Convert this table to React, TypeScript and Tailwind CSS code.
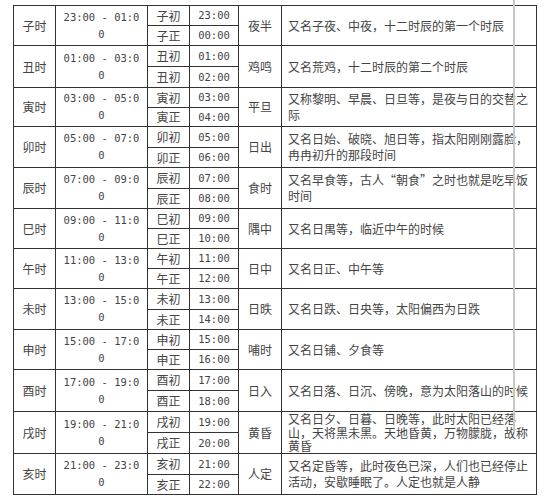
import React from "react";

type Row = {
  name: string;
  range: string;
  a: string;
  at: string;
  b: string;
  bt: string;
  alias: string;
  desc: string[];
  h: number;
};

const rows: Row[] = [
  { name: "子时", range: "23:00 - 01:00", a: "子初", at: "23:00", b: "子正", bt: "00:00", alias: "夜半", desc: ["又名子夜、中夜，十二时辰的第一个时辰"], h: 40 },
  { name: "丑时", range: "01:00 - 03:00", a: "丑初", at: "01:00", b: "丑初", bt: "02:00", alias: "鸡鸣", desc: ["又名荒鸡，十二时辰的第二个时辰"], h: 42 },
  { name: "寅时", range: "03:00 - 05:00", a: "寅初", at: "03:00", b: "寅正", bt: "04:00", alias: "平旦", desc: ["又称黎明、早晨、日旦等，是夜与日的交替之", "际"], h: 39 },
  { name: "卯时", range: "05:00 - 07:00", a: "卯初", at: "05:00", b: "卯正", bt: "06:00", alias: "日出", desc: ["又名日始、破晓、旭日等，指太阳刚刚露脸，", "冉冉初升的那段时间"], h: 41 },
  { name: "辰时", range: "07:00 - 09:00", a: "辰初", at: "07:00", b: "辰正", bt: "08:00", alias: "食时", desc: ["又名早食等，古人“朝食”之时也就是吃早饭", "时间"], h: 41 },
  { name: "巳时", range: "09:00 - 11:00", a: "巳初", at: "09:00", b: "巳正", bt: "10:00", alias: "隅中", desc: ["又名日禺等，临近中午的时候"], h: 40 },
  { name: "午时", range: "11:00 - 13:00", a: "午初", at: "11:00", b: "午正", bt: "12:00", alias: "日中", desc: ["又名日正、中午等"], h: 40 },
  { name: "未时", range: "13:00 - 15:00", a: "未初", at: "13:00", b: "未正", bt: "14:00", alias: "日昳", desc: ["又名日跌、日央等，太阳偏西为日跌"], h: 41 },
  { name: "申时", range: "15:00 - 17:00", a: "申初", at: "15:00", b: "申正", bt: "16:00", alias: "哺时", desc: ["又名日铺、夕食等"], h: 40 },
  { name: "酉时", range: "17:00 - 19:00", a: "酉初", at: "17:00", b: "酉正", bt: "18:00", alias: "日入", desc: ["又名日落、日沉、傍晚，意为太阳落山的时候"], h: 42 },
  { name: "戌时", range: "19:00 - 21:00", a: "戌初", at: "19:00", b: "戌正", bt: "20:00", alias: "黄昏", desc: ["又名日夕、日暮、日晚等，此时太阳已经落", "山，天将黑未黑。天地昏黄，万物朦胧，故称", "黄昏"], h: 42 },
  { name: "亥时", range: "21:00 - 23:00", a: "亥初", at: "21:00", b: "亥正", bt: "22:00", alias: "人定", desc: ["又名定昏等，此时夜色已深，人们也已经停止", "活动，安歇睡眠了。人定也就是人静"], h: 41 },
];

const hClass: Record<number, string> = {
  19: "h-[19px]",
  20: "h-[20px]",
  21: "h-[21px]",
  22: "h-[22px]",
};

const cjk = "font-['Noto_Sans_CJK_SC',sans-serif]";
const mono = "font-['DejaVu_Sans_Mono',monospace]";
const cell = "border border-[#333] p-0 align-middle";

export default function App() {
  return (
    <div className="relative w-[545px] h-[500px] bg-white overflow-hidden">
      <div className="pl-[13px] pt-[5px]">
        <table className="table-fixed border-collapse w-[523px] text-[#444]">
          <colgroup>
            <col className="w-[42px]" />
            <col className="w-[92px]" />
            <col className="w-[42px]" />
            <col className="w-[49px]" />
            <col className="w-[43px]" />
            <col className="w-[255px]" />
          </colgroup>
          <tbody>
            {rows.map((r) => {
              const top = Math.ceil(r.h / 2);
              const bot = r.h - top;
              const [r1, r2] = [r.range.slice(0, 12), r.range.slice(12)];
              return (
                <React.Fragment key={r.name}>
                  <tr className={hClass[top]}>
                    <td rowSpan={2} className={`${cell} text-center text-[12px] ${cjk}`}>
                      {r.name}
                    </td>
                    <td rowSpan={2} className={`${cell} text-center text-[10.5px] leading-[17px] ${mono}`}>
                      <div className="whitespace-nowrap">{r1}</div>
                      <div>{r2}</div>
                    </td>
                    <td className={`${cell} ${hClass[top]} text-center text-[12px] leading-none ${cjk}`}>
                      {r.a}
                    </td>
                    <td className={`${cell} ${hClass[top]} text-center text-[10.5px] leading-none ${mono}`}>
                      {r.at}
                    </td>
                    <td rowSpan={2} className={`${cell} text-center text-[12px] ${cjk}`}>
                      {r.alias}
                    </td>
                    <td
                      rowSpan={2}
                      className={`${cell} pl-[6px] text-[12px] ${r.desc.length > 2 ? "leading-[13.5px]" : "leading-[16px]"} ${cjk}`}
                    >
                      {r.desc.map((d, i) => (
                        <div key={i} className="whitespace-nowrap">
                          {d}
                        </div>
                      ))}
                    </td>
                  </tr>
                  <tr className={hClass[bot]}>
                    <td className={`${cell} ${hClass[bot]} text-center text-[12px] leading-none ${cjk}`}>
                      {r.b}
                    </td>
                    <td className={`${cell} ${hClass[bot]} text-center text-[10.5px] leading-none ${mono}`}>
                      {r.bt}
                    </td>
                  </tr>
                </React.Fragment>
              );
            })}
          </tbody>
        </table>
      </div>
      <div className="absolute left-[513px] top-0 h-[432px] w-[2px] bg-[#c6c6c6]" />
    </div>
  );
}
